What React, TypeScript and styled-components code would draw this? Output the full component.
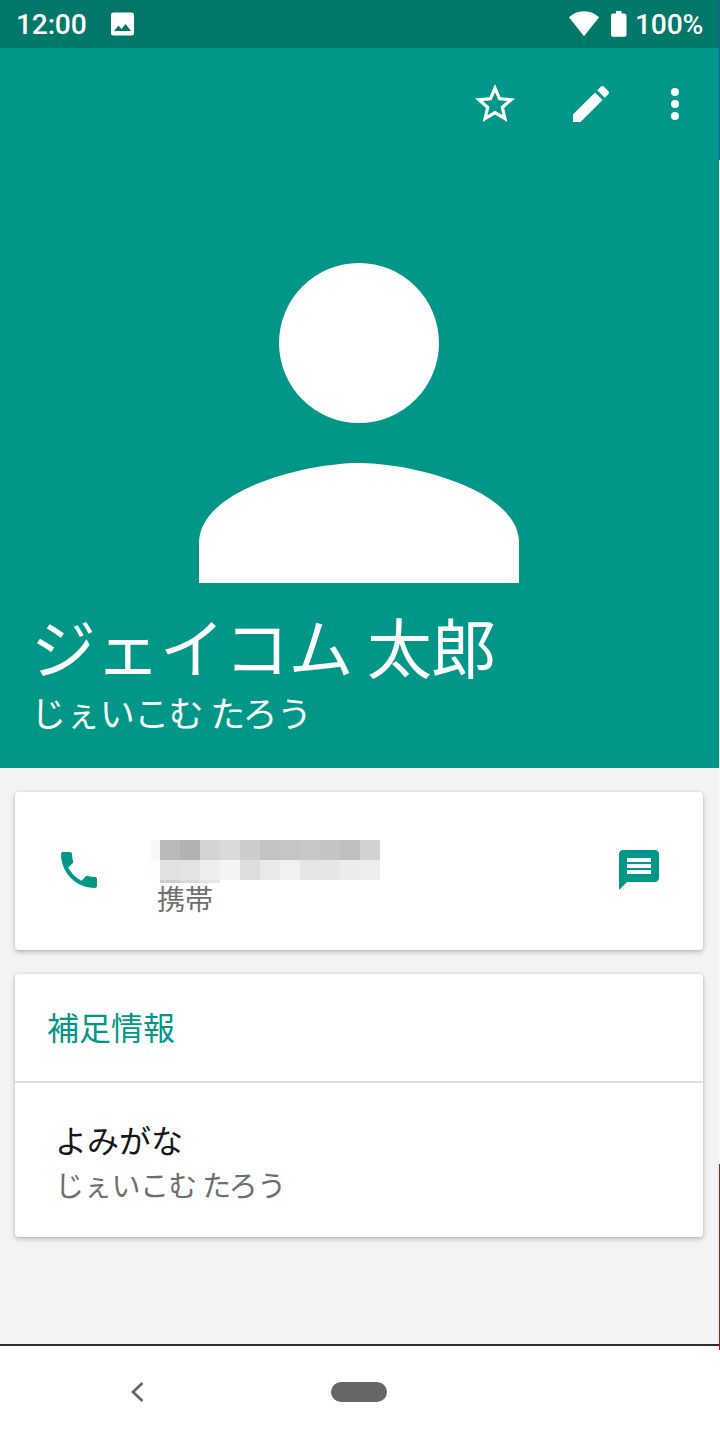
import React from 'react';
import styled, { createGlobalStyle } from 'styled-components';

const TEAL = '#009688';

const GlobalStyle = createGlobalStyle`
  * { box-sizing: border-box; }
  body { margin: 0; background: #fff; }
`;

const Frame = styled.div`
  display: flex;
  width: 720px;
  height: 1440px;
  overflow: hidden;
`;

const Screen = styled.div`
  width: 719px;
  display: flex;
  flex-direction: column;
  background: #f3f3f3;
  font-family: Roboto, 'Noto Sans CJK JP', sans-serif;
`;

const Edge = styled.div`
  width: 1px;
  display: flex;
  flex-direction: column;
`;

const EdgePart = styled.span<{ $height: number; $tone: string }>`
  height: ${(p) => p.$height}px;
  background: ${(p) => p.$tone};
`;

const StatusBar = styled.header`
  flex: none;
  height: 48px;
  padding: 0 17px 0 16px;
  display: flex;
  align-items: center;
  justify-content: space-between;
  background: #007869;
  color: #fff;
  font-size: 28.2px;
  font-weight: 500;
  line-height: 48px;
`;

const StatusGroup = styled.div<{ $gap: number }>`
  display: flex;
  align-items: center;
  gap: ${(p) => p.$gap}px;
  height: 48px;
`;

const StatusText = styled.span<{ $width: number }>`
  width: ${(p) => p.$width}px;
  padding-top: 2px;
  letter-spacing: -0.2px;
  white-space: nowrap;
`;

const Icon = styled.svg<{ $color?: string }>`
  display: block;
  flex: none;
  fill: ${(p) => p.$color ?? '#fff'};
`;

const Hero = styled.section`
  flex: none;
  height: 720px;
  display: flex;
  flex-direction: column;
  background: ${TEAL};
  color: #fff;
`;

const Toolbar = styled.nav`
  height: 112px;
  padding: 0 20px 0 471px;
  display: flex;
  align-items: center;
`;

const Action = styled.span<{ $gap: number }>`
  margin-right: ${(p) => p.$gap}px;
`;

const Avatar = styled.div`
  height: 443px;
  padding: 103.4px 0 0 199px;
`;

const Names = styled.div`
  padding-left: 31px;
  font-family: 'Noto Sans CJK JP', sans-serif;
`;

const FullName = styled.h1`
  margin: 0;
  font-size: 65px;
  font-weight: 400;
  line-height: 84px;
  letter-spacing: -0.6px;
  white-space: nowrap;
`;

const Reading = styled.p`
  margin: 2px 0 0;
  font-size: 35px;
  line-height: 46px;
  letter-spacing: -0.6px;
  white-space: nowrap;
`;

const Content = styled.main`
  flex: 1;
  display: flex;
  flex-direction: column;
  gap: 24px;
  padding: 24px 16px 0 15px;
  border-bottom: 2px solid #2f2d2e;
`;

const Card = styled.section`
  border-radius: 4px;
  background: #fff;
  box-shadow: 0 2px 5px rgba(0, 0, 0, 0.24), 0 0 3px rgba(0, 0, 0, 0.08);
  font-family: 'Noto Sans CJK JP', sans-serif;
`;

const PhoneRow = styled(Card)`
  height: 158px;
  display: flex;
  padding: 0 40px;
`;

const PhoneIcon = styled.div`
  padding-top: 54px;
  width: 96px;
`;

const PhoneInfo = styled.div`
  flex: 1;
  padding-top: 48px;
`;

const MessageIcon = styled.div`
  padding-top: 54px;
`;

const MosaicRow = styled.div<{ $height: number }>`
  display: flex;
  height: ${(p) => p.$height}px;
`;

const MosaicCell = styled.span<{ $width?: number; $tone: string }>`
  width: ${(p) => p.$width ?? 20}px;
  background: ${(p) => p.$tone};
`;

const PhoneType = styled.p`
  margin: -5px 0 0 6px;
  font-size: 28px;
  line-height: 40px;
  color: #6e6e6e;
`;

const InfoCard = styled(Card)`
  height: 263px;
`;

const InfoTitle = styled.h2`
  margin: 0;
  height: 109px;
  padding-left: 32px;
  border-bottom: 2px solid #dedede;
  color: ${TEAL};
  font-size: 32px;
  font-weight: 400;
  line-height: 105px;
`;

const InfoBody = styled.div`
  padding: 33px 0 0 40px;
`;

const InfoLabel = styled.p`
  margin: 0;
  color: #171717;
  font-size: 32px;
  line-height: 46px;
`;

const InfoValue = styled.p`
  margin: 1px 0 0 0;
  color: #6e6e6e;
  font-size: 29px;
  line-height: 42px;
  letter-spacing: -0.7px;
`;

const NavBar = styled.footer`
  flex: none;
  height: 94px;
  padding: 0 0 2px 130px;
  display: flex;
  align-items: center;
  background: #fff;
`;

const HomePill = styled.span`
  width: 56px;
  height: 20px;
  margin-left: 186px;
  border-radius: 10px;
  background: #666;
`;

const numberTones = [
  ['#f8f8f8', '#b9b9b9', '#b2b2b2', '#d4d4d4', '#dadada', '#cccccc', '#c3c3c3', '#c5c5c5', '#c8c8c8', '#c4c4c4', '#bfbfbf', '#d2d2d2'],
  ['#fdfdfd', '#e1e1e1', '#e3e3e3', '#eeeeee', '#f4f4f4', '#dddddd', '#e9e9e9', '#f1f1f1', '#e5e5e5', '#e6e6e6', '#ececec', '#ededed'],
];

export default function App() {
  return (
    <Frame>
      <GlobalStyle />
      <Screen>
        <StatusBar>
          <StatusGroup $gap={24}>
            <StatusText $width={71}>12:00</StatusText>
            <Icon width="23" height="24" viewBox="0 0 23 24">
              <path d="M2.500 .5h18a2.500 2.500 0 0 1 2.500 2.500v18a2.500 2.500 0 0 1-2.500 2.500h-18A2.500 2.500 0 0 1 0 21V3A2.500 2.500 0 0 1 2.500 .5zM3 19h17l-5.500-7-4 5-3-3.500z" fillRule="evenodd" />
            </Icon>
          </StatusGroup>
          <StatusGroup $gap={8.5}>
            <Icon width="30" height="26" viewBox="0 0 30 26">
              <path d="M0 6.300C4 2.500 9 .3 15 .3s11 2.200 15 6L15 25.300z" />
            </Icon>
            <Icon width="19" height="26" viewBox="0 0 19 26">
              <path d="M8 0h5.500v2.500h3Q18.500 2.500 18.500 4.500v19.300Q18.500 25.800 16.500 25.800H5Q3 25.800 3 23.800V4.500Q3 2.500 5 2.500h3z" />
            </Icon>
            <StatusText $width={67}>100%</StatusText>
          </StatusGroup>
        </StatusBar>

        <Hero>
          <Toolbar>
            <Action $gap={48}>
              <Icon width="48" height="48" viewBox="0 0 24 24">
                <path d="M22 9.240l-7.190-.62L12 2 9.190 8.630 2 9.240l5.460 4.730L5.820 21 12 17.270 18.180 21l-1.630-7.030L22 9.240zM12 15.400l-3.760 2.270 1-4.280-3.320-2.880 4.380-.38L12 6.100l1.710 4.040 4.380.38-3.320 2.880 1 4.280L12 15.400z" />
              </Icon>
            </Action>
            <Action $gap={36}>
              <Icon width="48" height="48" viewBox="0 0 24 24">
                <path d="M3 17.250V21h3.750L17.810 9.940l-3.750-3.750L3 17.250zM20.710 7.040a1 1 0 0 0 0-1.410l-2.340-2.340a1 1 0 0 0-1.410 0l-1.830 1.830 3.750 3.750 1.830-1.830z" />
              </Icon>
            </Action>
            <Action $gap={0}>
              <Icon width="48" height="48" viewBox="0 0 24 24">
                <circle cx="12" cy="6" r="2" />
                <circle cx="12" cy="12" r="2" />
                <circle cx="12" cy="18" r="2" />
              </Icon>
            </Action>
          </Toolbar>
          <Avatar>
            <Icon width="320" height="320" viewBox="4 4 16 16">
              <path d="M12 14c-2.670 0-8 1.340-8 4v2h16v-2c0-2.660-5.330-4-8-4z" />
              <circle cx="12" cy="8" r="4" />
            </Icon>
          </Avatar>
          <Names>
            <FullName>ジェイコム 太郎</FullName>
            <Reading>じぇいこむ たろう</Reading>
          </Names>
        </Hero>

        <Content>
          <PhoneRow>
            <PhoneIcon>
              <Icon $color={TEAL} width="48" height="48" viewBox="0 0 24 24">
                <path d="M6.620 10.790c1.440 2.830 3.760 5.140 6.590 6.590l2.200-2.200c.27-.27.67-.36 1.020-.24 1.120.37 2.330.57 3.570.57.55 0 1 .45 1 1V20c0 .55-.45 1-1 1-9.390 0-17-7.610-17-17 0-.55.45-1 1-1h3.500c.55 0 1 .45 1 1 0 1.250.2 2.450.57 3.570.11.35.03.74-.25 1.020l-2.200 2.200z" />
              </Icon>
            </PhoneIcon>
            <PhoneInfo>
              {numberTones.map((row, r) => (
                <MosaicRow $height={20} key={r}>
                  {row.map((tone, i) => (
                    <MosaicCell key={i} $tone={tone} $width={i === 0 ? 9 : 20} />
                  ))}
                </MosaicRow>
              ))}
              <MosaicRow $height={3}>
                <MosaicCell $width={9} $tone="#fdfdfd" />
                <MosaicCell $tone="#cecece" />
                <MosaicCell $tone="#dadada" />
                <MosaicCell $tone="#e6e6e6" />
              </MosaicRow>
              <PhoneType>携帯</PhoneType>
            </PhoneInfo>
            <MessageIcon>
              <Icon $color={TEAL} width="48" height="48" viewBox="0 0 24 24">
                <path d="M20 2H4c-1.100 0-2 .9-2 2v18l4-4h14c1.100 0 2-.9 2-2V4c0-1.100-.9-2-2-2zM18 14H6v-2h12v2zm0-3H6V9h12v2zm0-3H6V6h12v2z" />
              </Icon>
            </MessageIcon>
          </PhoneRow>
          <InfoCard>
            <InfoTitle>補足情報</InfoTitle>
            <InfoBody>
              <InfoLabel>よみがな</InfoLabel>
              <InfoValue>じぇいこむ たろう</InfoValue>
            </InfoBody>
          </InfoCard>
        </Content>

        <NavBar>
          <Icon width="15" height="22" viewBox="0 0 15 22">
            <path d="M12.500 2L3 11l9.500 9" fill="none" stroke="#666" strokeWidth="2.800" />
          </Icon>
          <HomePill />
        </NavBar>
      </Screen>
      <Edge>
        <EdgePart $height={160} $tone="#2b55a6" />
        <EdgePart $height={1004} $tone="#f8f8f8" />
        <EdgePart $height={186} $tone="#d40a10" />
        <EdgePart $height={90} $tone="#fff" />
      </Edge>
    </Frame>
  );
}
